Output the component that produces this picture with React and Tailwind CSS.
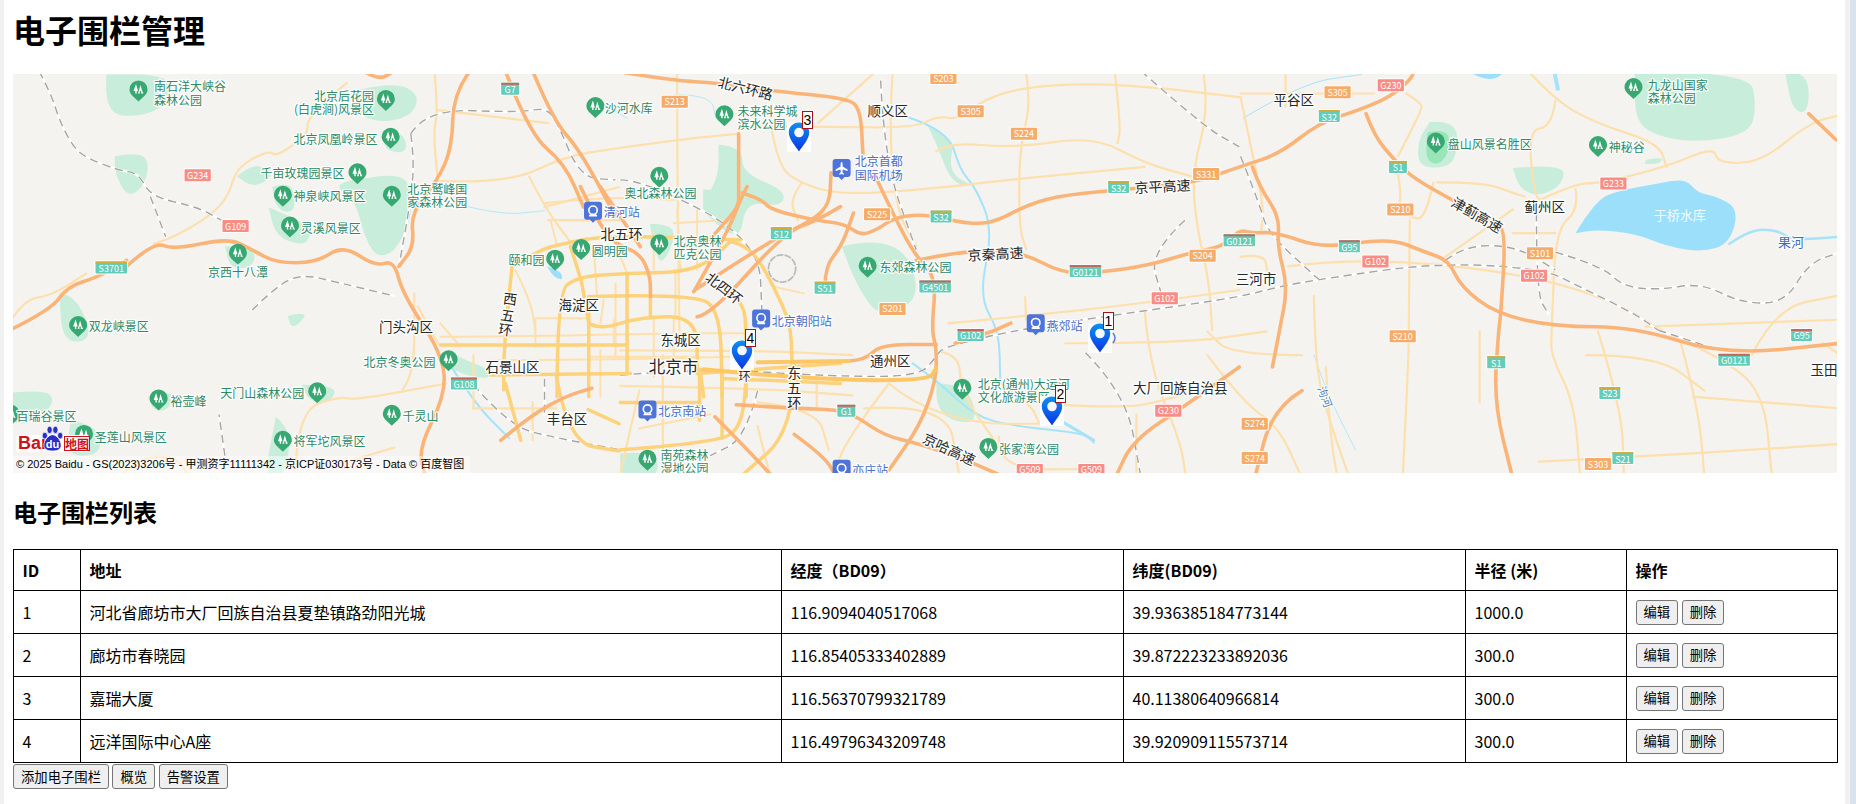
import React from "react";

const S = 1.1837;
const smooth = (s) => {
  const p = s.trim().split(/\s+/).map((q) => q.split(",").map(Number));
  if (p.length < 3) return "M" + p.map((a) => a.join(" ")).join("L");
  let d = `M${p[0][0]} ${p[0][1]}`;
  for (let i = 1; i < p.length - 1; i++) {
    const mx = (p[i][0] + p[i + 1][0]) / 2, my = (p[i][1] + p[i + 1][1]) / 2;
    d += `Q${p[i][0]} ${p[i][1]} ${mx} ${my}`;
  }
  const l = p[p.length - 1];
  return d + `L${l[0]} ${l[1]}`;
};
const poly = (s) => smooth(s + " " + s.trim().split(/\s+/)[0]) + "Z";

const green = [
  "90,63 87,96 120,99 143,87 143,63", "303,76 333,69 355,80 347,99 317,104 300,93", "323,110 340,110 345,129 325,128",
  "320,149 343,146 347,169 347,186 333,214 317,217 307,197 300,169 280,155", "200,149 213,138 230,144 227,152 213,158",
  "230,158 247,152 250,177 240,180 232,172", "227,175 260,189 263,197 257,208 233,200", "97,132 117,128 127,138 120,160 107,166 97,146",
  "50,248 63,248 80,287 53,290", "243,267 263,262 247,279", "8,332 37,329 47,338 33,355 8,360", "233,352 247,363 240,404 223,404",
  "607,122 627,124 627,146 664,161 660,175 630,170 625,205 594,180 594,170 607,150", "711,208 757,197 781,250 744,270 724,242",
  "784,107 807,115 801,146 824,158 804,155 791,121", "1381,60 1478,60 1484,90 1478,113 1431,121 1394,113 1381,99", "1508,60 1528,60 1528,96 1514,93",
  "1208,103 1231,101 1231,132 1221,142 1198,141 1198,118", "1278,142 1321,138 1321,155 1301,166 1284,160", "1391,135 1404,132 1404,138 1388,139",
  "791,324 817,324 827,358 801,355 791,341", "524,383 554,380 557,404 524,404", "377,296 393,304 413,312 413,321 387,315 377,307",
  "549,189 569,189 569,206 558,225 552,206", "594,160 617,160 611,177 594,183", "190,208 215,208 215,225 195,228", "125,335 145,328 145,345 130,348", "255,325 285,325 280,340 262,340",
  "60,355 85,360 85,385 55,385",
];
const light = [
  "524,125 574,118 624,113", "624,107 691,107 774,108 791,98 811,101 831,84 867,73 941,70 1047,82", "791,128 801,120 857,125 924,115 967,138 1007,149",
  "737,163 791,159 824,155 891,148 967,141", "867,63 871,87 861,127 861,192 867,211", "942,63 947,107 944,121", "1017,63 1021,93 1007,146 1011,192 1021,234 1024,279",
  "572,63 572,135 574,279", "754,63 751,107 757,177 774,208", "651,104 657,141 677,155 704,163 737,163", "737,63 691,104", "677,155 667,169 674,186",
  "866,251 867,270", "801,273 867,267 967,256 1047,245", "794,297 811,300 811,330 840,372", "751,324 771,341 824,358 877,358", "897,342 951,345 984,338 1010,330",
  "967,262 971,310 997,372 1002,404", "751,324 714,372 704,404", "1086,63 1086,90", "1048,79 1114,79 1161,79", "1188,79 1201,87 1201,93 1181,132",
  "1291,60 1314,85 1348,104 1401,121 1408,141", "1314,85 1311,107 1291,110 1296,163 1301,169",
  "1301,169 1331,155 1351,155 1408,141 1448,124 1451,138 1488,137 1528,104 1555,97", "1214,154 1254,154 1278,163 1288,166", "1211,154 1204,186 1191,183",
  "1191,186 1190,279 1190,300 1185,404", "1181,146 1184,166 1181,175", "1331,160 1334,177 1314,194 1311,279 1310,300 1330,340 1335,404", "1221,217 1261,189 1278,177",
  "1278,197 1314,197", "1088,225 1148,217 1288,231 1368,256 1401,279 1450,300 1490,330 1497,404", "1048,217 1068,214 1071,231", "1048,82 1058,130 1068,177 1065,197",
  "367,60 370,93 366,113 370,153", "370,93 463,104", "370,153 430,155 477,132 523,125", "293,70 260,97 260,113 250,121 233,132 227,127 200,141 193,166 177,183 147,200 130,206",
  "447,149 460,175 483,206", "460,175 523,158", "463,186 523,186", "8,273 20,253 43,250 73,231", "250,389 253,346 287,335 300,338 377,324", "340,329 350,318 350,248", "370,290 353,259",
  "100,404 117,386 150,386 160,404", "300,388 333,378", "844,369 841,397 932,396", "1350,280 1370,345 1372,404", "1300,390 1420,384 1555,375", "1390,276 1555,270", "1340,300 1400,300 1440,330",
  "1110,250 1111,300 1118,340 1140,404", "1020,300 1050,340 1080,360 1100,404", "1540,290 1555,300", "1430,335 1555,345", "1100,300 1040,300 1020,280", "520,240 520,300", "540,330 524,400", "640,340 690,345 700,380", "730,345 800,340 810,400",
  "840,320 870,340 878,358", "1120,310 1124,370 1130,404", "900,290 1000,290 1070,280", "524,296 640,296 720,300", "524,326 640,328 720,334", "540,362 600,350", "640,360 650,400", "560,300 560,380", "690,318 690,345",
  "400,345 470,345", "400,300 400,345", "450,340 450,372", "1480,300 1500,260 1552,250", "1420,290 1435,345 1440,404", "1250,280 1250,340", "960,350 960,404",
];
const rails = [
  "33,60 43,79 50,101 60,121 70,132 100,144 117,146 127,166 167,175 187,186", "127,166 140,200", "347,113 350,135 347,169 337,225", "347,113 360,92 440,95 460,91 470,101 490,150 520,152",
  "213,262 230,245 253,231 287,239 333,250", "524,317 591,311 704,318 777,318 791,301 797,293 867,277 971,262 1047,251 1081,242 1121,235 1214,222 1304,227 1334,242 1381,265 1401,279",
  "1221,220 1238,207 1281,208 1314,228", "1314,213 1354,225 1371,242 1401,245 1437,239 1471,256 1508,256 1528,222 1555,213", "1048,132 1064,172 1071,197 1114,236",
  "744,68 747,135 774,211", "964,60 1017,107 1047,124", "1001,186 971,214 981,248", "917,298 951,332 964,404", "524,152 544,152 641,203 644,270", "1298,180 1298,248 1308,265",
  "400,325 430,360 470,370 524,380", "640,330 630,370 600,385", "1401,279 1450,295", "460,320 460,350", "190,385 185,350",
];
const orange = [
  "804,186 824,190 844,186 864,175 891,166 937,161 1007,155 1047,141 1081,130 1114,104 1148,93 1174,82 1191,68 1195,60",
  "804,186 784,181 757,183 741,194 727,199 714,189 687,186 651,177 644,169 627,163", "520,60 567,68 607,70 654,77 717,83 727,93 729,130",
  "624,113 624,163 624,175 607,194 600,202", "587,245 651,203 687,186 701,172 702,146", "697,242 697,225 711,208 721,180",
  "741,152 757,186 774,217 791,234 787,279 791,293 791,321 777,360 751,397", "774,220 817,211 864,213 897,231 931,230 971,224 1004,214 1034,208 1047,194 1058,197 1078,196 1117,210 1174,201 1204,213 1224,220 1234,242 1264,265 1314,276 1380,276 1458,300 1555,290",
  "1058,141 1064,158 1081,183 1079,208 1088,242 1081,279 1075,310", "1047,310 1004,341 957,372 942,404", "1154,96 1161,115 1178,135 1191,148 1214,162 1264,189 1272,197 1268,265 1266,279 1262,340 1278,404",
  "1528,96 1551,118", "107,225 130,204 147,211 193,201 213,211 233,222 267,222 290,207 317,225 333,220 340,248 373,298 377,332 353,380 360,404",
  "8,279 43,262 57,242 83,234 107,220", "307,60 320,68 333,60", "397,60 383,79 382,124 370,152 347,180 350,208 337,225",
  "427,60 447,113 477,138 493,175", "450,60 467,101 490,127 520,183", "423,372 447,352 477,335 500,328", "622,342 671,345 707,346 724,352 747,368 777,375 817,389 851,404",
  "604,352 624,372 654,404", "671,367 697,386 707,404", "807,290 834,282 854,273", "717,305 731,304 744,291 791,291", "1100,330 1075,345 1060,404",
];
const yellowZ = [
  "215,230 190,470 190,600", "0,465 350,465 560,465", "150,555 570,550", "350,620 350,310 410,260 560,250 770,245 870,155", "870,155 900,160 950,200 1000,290 1050,400 1055,510 1055,620",
  "215,230 300,180 350,165 500,135 900,150", "390,170 420,260 430,310 445,400", "445,320 770,310 840,370 845,620", "445,320 445,620", "445,400 480,420 600,380 770,380 770,550", "560,250 560,550", "630,320 630,380",
  "770,550 1200,520", "870,310 910,340 917,420 917,620", "780,550 790,620", "845,565 1200,580",
];
const lightZ = [
  "710,60 720,245", "460,170 470,320", "520,150 560,250", "640,130 640,240", "770,150 770,240", "290,385 440,385", "225,240 270,330 285,420", "285,385 285,470", "0,440 190,440 700,430 920,430", "0,400 60,470", "140,510 340,510 700,505 870,500", "640,380 640,560", "705,240 705,380",
  "490,330 480,400", "350,165 330,90", "480,480 480,620", "1000,290 1090,310", "310,40 500,20 700,30", "700,100 860,90", "520,390 520,465", "700,380 700,540", "350,90 470,90", "770,60 770,150", "445,500 770,500",
];
const orangeZ = [
  "420,-10 470,90 520,160 600,190 630,260 630,320", "480,-10 560,110 600,170", "760,305 860,130 900,30 920,-10", "770,380 810,375 1030,130 1130,90 1200,50",
];
const yellowB = [
  "524,380 607,374 627,360 631,312", "671,307 671,363 624,404", "591,312 591,355", "470,318 480,374 523,381", "497,346 523,358", "610,370 610,312", "427,324 440,372", "524,340 591,340",
];
const water = ["1240,60 1256,70 1275,60", "462,225 473,228 476,237 468,234"];
const thinWater = [
  ["767,99 801,110 811,144 824,158 839,194 827,251 844,279 845,320", 2], ["771,307 791,321 824,352 857,360 917,366 924,374", 2], ["897,356 924,372", 3], ["1461,206 1478,194 1501,194 1514,203 1554,200", 2.5],
  ["1313,60 1316,75", 4], ["373,169 420,182 460,178", .8], ["570,80 600,80 605,100", .8], ["505,85 530,100", .8], ["1050,100 1100,70 1150,63", 1], ["1110,300 1120,330 1145,380", .8], ["375,300 400,340 430,370", 2],
];
const gl = [
  [["南石洋大峡谷", "森林公园"], 117, 76, 130, [72.5, 84], "l"], [["北京后花园", "(白虎涧)风景区"], 326, 84, 316, [81, 92], "r"], [["北京凤凰岭景区"], 330, 116, 319, [117], "r"],
  [["千亩玫瑰园景区"], 302, 146, 291, [146], "r"], [["神泉峡风景区"], 239, 165, 248, [165], "l"], [["北京鹫峰国", "家森林公园"], 331, 165, 344, [159, 170], "l"], [["灵溪风景区"], 245, 191, 254, [192], "l"],
  [["京西十八潭"], 201, 214, 201, [229], "c"], [["圆明园"], 491, 210, 500, [212], "l"], [["颐和园"], 469, 219, 460, [219], "r"], [["奥北森林公园"], 557, 149, 558, [163], "c"], [["北京奥林", "匹克公园"], 557, 206, 569, [203, 214], "l"],
  [["东郊森林公园"], 733, 225, 743, [225], "l"], [["未来科学城", "滨水公园"], 612, 97, 623, [93, 104], "l"], [["沙河水库"], 503, 90, 511, [91], "l"], [["双龙峡景区"], 66, 275, 75, [275], "l"], [["北京冬奥公园"], 379, 304, 368, [305], "r"],
  [["天门山森林公园"], 268, 331, 257, [332], "r"], [["裕壶峰"], 134, 337, 144, [338], "l"], [["千灵山"], 331, 350, 340, [351], "l"], [["百瑞谷景区"], 9, 350, 14, [351], "l"], [["圣莲山风景区"], 71, 367, 80, [369], "l"], [["将军坨风景区"], 239, 372, 248, [372], "l"],
  [["九龙山国家", "森林公园"], 1380, 74, 1392, [71, 82], "l"], [["盘山风景名胜区"], 1213, 120, 1223, [121], "l"], [["神秘谷"], 1350, 123, 1359, [124], "l"], [["南苑森林", "湿地公园"], 547, 388, 558, [384, 395], "l"],
  [["北京(通州)大运河", "文化旅游景区"], 813, 328, 826, [324, 335], "l"], [["张家湾公园"], 835, 378, 844, [379], "l"],
];
const bl = [
  [["清河站"], 501, 178, 510, [179], "t"], [["北京首都", "国际机场"], 711, 142, 722, [136, 147], "p"], [["北京朝阳站"], 643, 269, 652, [271], "t"], [["北京南站"], 547, 346, 556, [347], "t"], [["燕郊站"], 875, 273, 884, [275], "t"], [["亦庄站"], 711, 396, 720, [397], "t"],
];
const black = [
  ["顺义区", 750, 93, 13.5], ["平谷区", 1093, 84, 13.5], ["蓟州区", 1305, 174, 13.5], ["三河市", 1061, 235, 13.5], ["通州区", 752, 304, 13.5], ["东城区", 575, 286, 13.5], ["北京市", 569, 309, 16.5], ["海淀区", 489, 257, 13.5],
  ["门头沟区", 343, 275, 13.5], ["石景山区", 433, 309, 13.5], ["丰台区", 479, 353, 13.5], ["大厂回族自治县", 997, 327, 13.5], ["玉田", 1541, 312, 13.5], ["京平高速", 982, 157, 14, -3], ["京秦高速", 841, 214, 14, -3], ["北五环", 525, 197, 14],
  ["北四环", 612, 243, 14, 38], ["北六环路", 630, 74, 14, 14], ["津蓟高速", 1248, 181, 14, 30], ["京哈高速", 802, 379, 14, 25], ["西", 431, 252, 14, 8], ["五", 429, 266, 14, 8], ["环", 427, 278, 14, 8], ["东", 671, 314, 14], ["五", 671, 327, 14], ["环", 671, 340, 14], ["环", 629, 317, 12],
];
const shields = [
  ["G7", 431, 75, "t", "r"], ["S213", 570, 86, "o"], ["S203", 797, 66, "o"], ["S305", 820, 94, "o"], ["S224", 865, 113, "o"], ["S305", 1130, 78, "o"], ["G230", 1175, 72, "f"], ["S32", 1123, 98, "t", "y"], ["S331", 1019, 147, "o"], ["S32", 945, 158, "t", "y"],
  ["S225", 741, 181, "o"], ["S32", 795, 183, "t", "y"], ["S12", 660, 197, "t", "y"], ["S51", 697, 243, "t", "y"], ["G4501", 790, 242, "t", "r"], ["S201", 754, 261, "o"], ["G0121", 917, 229, "t", "r"], ["S204", 1016, 216, "o"], ["G0121", 1047, 203, "t", "r"], ["G102", 984, 252, "f"],
  ["G102", 820, 283, "t", "r"], ["G95", 1140, 208, "t", "r"], ["G102", 1162, 221, "f"], ["S210", 1183, 177, "o"], ["S1", 1181, 141, "t", "y"], ["G233", 1363, 155, "f"], ["S101", 1301, 214, "o"], ["G102", 1296, 233, "f"], ["S210", 1185, 284, "o"], ["S1", 1264, 306, "t", "y"], ["G95", 1522, 283, "t", "r"],
  ["G234", 167, 148, "f"], ["G109", 199, 191, "f"], ["S3701", 94, 226, "t", "y"], ["G108", 392, 324, "t", "r"], ["G1", 715, 347, "t", "r"], ["G230", 987, 347, "f"], ["S274", 1060, 358, "o"], ["S274", 1060, 387, "o"], ["G509", 870, 397, "f"], ["G509", 922, 397, "f"], ["S21", 1371, 387, "t", "y"], ["S303", 1350, 392, "o"], ["G0121", 1465, 304, "t", "r"], ["S23", 1360, 332, "t", "y"],
];

const Lines = ({ list, w, c, dash, op = 1 }) => (
  <g fill="none" stroke={c} strokeWidth={w} strokeOpacity={op} strokeLinejoin="round" strokeLinecap={dash ? "butt" : "round"} strokeDasharray={dash}>
    {list.map((s, i) => <path key={i} d={smooth(s)} vectorEffect="non-scaling-stroke" />)}
  </g>
);

const Pin = ({ x, y, blue, plane }) => {
  const px = x * S, py = y * S;
  if (blue) {
    return (
      <g transform={`translate(${px - 9} ${py - 9})`}>
        <path d="M3 0h12a3 3 0 0 1 3 3v12a3 3 0 0 1-3 3h-3l-3 3-3-3H3a3 3 0 0 1-3-3V3a3 3 0 0 1 3-3z" fill="#4f74d9" />
        {plane ? (
          <path d="M9 3c.8 0 1 1 1 2v2.5l5 3v1.3l-5-1.4v3.2l1.4 1v1L9 14.9 6.600 15.600v-1l1.400-1v-3.200l-5 1.400v-1.300l5-3V5c0-1 .2-2 1-2z" fill="#fff" />
        ) : (
          <g fill="none" stroke="#fff" strokeWidth="1.600"><circle cx="9" cy="8.500" r="4.200" /><path d="M5 14h8M7 12.500l-1 1.500M11 12.500l1 1.500" /></g>
        )}
      </g>
    );
  }
  return (
    <g transform={`translate(${px} ${py})`}>
      <path d="M0 11.500 C-3 8 -9 5 -9 -.5 A9 9 0 0 1 9 -.5 C9 5 3 8 0 11.500Z" fill="#38a873" />
      <path d="M-2.500 -6 L-5 1 H-3.200 V3.500 H-1.800 V1 H-.5 Z M2 -5 L-.500 3.500 H1.300 V1 H2.700 V3.500 H5 L3.500 .5 Z" fill="#fff" />
    </g>
  );
};

const Txt = ({ x, y, size = 12, fill = "#2b8a68", anchor = "start", rot, children, halo = 2.500 }) => (
  <text
    x={x * S} y={y * S} fontSize={size} fill={fill} textAnchor={anchor} dominantBaseline="central"
    stroke="#fff" strokeWidth={halo} strokeOpacity=".85" strokeLinejoin="round"
    transform={rot ? `rotate(${rot} ${x * S} ${y * S})` : undefined}
    className="[paint-order:stroke]"
  >{children}</text>
);

const Poi = ({ item, blue }) => {
  const [lines, px, py, tx, ys, align] = item;
  const a = align === "r" ? "end" : align === "c" ? "middle" : "start";
  return (
    <g>
      <Pin x={px} y={py} blue={blue} plane={align === "p"} />
      {lines.map((t, i) => <Txt key={i} x={tx} y={ys[i]} anchor={blue ? "start" : a} fill={blue ? "#4a6fc9" : "#2b8a68"}>{t}</Txt>)}
    </g>
  );
};

const Shield = ({ s }) => {
  const [t, x, y, k, top] = s;
  const w = Math.max(18, t.length * 5.300 + 5);
  const fill = k === "o" ? "#f7ab68" : k === "f" ? "#f98c84" : "#62cdb9";
  const cx = x * S, cy = y * S;
  return (
    <g>
      <rect x={cx - w / 2 - 1} y={cy - 7} width={w + 2} height={14} rx="2" fill="#fff" opacity=".9" />
      <rect x={cx - w / 2} y={cy - 6} width={w} height={12} rx="1" fill={fill} />
      {top && <rect x={cx - w / 2} y={cy - 6} width={w} height={2} fill={top === "r" ? "#c2685c" : "#d1ab3c"} />}
      <text x={cx} y={cy + (top ? 1 : 0)} fontSize="9" fill="#fff" textAnchor="middle" dominantBaseline="central">{t}</text>
    </g>
  );
};

const Marker = ({ pos, n }) => (
  <div className={`absolute w-6 h-[30px] bg-white/90 ${pos}`}>
    <svg viewBox="0 0 24 30" className="absolute left-0 top-0 h-[30px] w-6">
      <defs>
        <linearGradient id={`mg${n}`} x1="0" y1="0" x2="0" y2="1">
          <stop offset="0" stopColor="#0f90f0" />
          <stop offset="1" stopColor="#0a35e6" />
        </linearGradient>
      </defs>
      <path d="M12 .5C6 .5 1.800 5 1.800 10.500 1.800 17 8.500 24 12 29.500 15.500 24 22.200 17 22.200 10.500 22.200 5 18 .5 12 .5Z" fill={`url(#mg${n})`} />
      <circle cx="12" cy="10.500" r="4.800" fill="#f4f8fb" />
    </svg>
    <div className="absolute left-[15px] top-[-11px] flex h-[18px] w-[11px] items-center justify-center border border-[#a5121c] bg-white font-['Liberation_Sans',sans-serif] text-[14px] leading-none text-black">{n}</div>
  </div>
);

const BaiduLogo = () => (
  <div className="absolute left-[3px] top-[351px] h-[27px] w-[73px]">
    <div className="absolute bottom-0 left-0 h-[17px] w-[73px] rounded-[2px] bg-white/90" />
    <span className="absolute bottom-[1px] left-[2px] font-['Liberation_Sans',sans-serif] text-[18px] font-bold leading-[16px] text-[#d0101c]">Bai</span>
    <svg viewBox="0 0 24 28" className="absolute left-[25px] top-0 h-[27px] w-[23px]">
      <g fill="#2a2fc8" stroke="#fff" strokeWidth=".8">
        <ellipse cx="4" cy="11" rx="2.800" ry="3.500" /><ellipse cx="9" cy="5" rx="2.800" ry="3.800" /><ellipse cx="15" cy="5" rx="2.800" ry="3.800" /><ellipse cx="20" cy="11" rx="2.800" ry="3.500" />
        <path d="M12 10c4 0 9 6 9 11 0 4-3 6-9 6s-9-2-9-6c0-5 5-11 9-11z" />
      </g>
    </svg>
    <span className="absolute bottom-[2px] left-[28px] w-[17px] text-center font-['Liberation_Sans',sans-serif] text-[11px] font-bold leading-[11px] text-white">du</span>
    <span className="absolute bottom-[1px] left-[48px] whitespace-nowrap border border-[#d0101c] text-[12px] font-bold leading-[13px] text-[#d0101c]">地图</span>
  </div>
);

const MapView = () => (
  <div className="relative h-[399px] w-[1824px] overflow-hidden bg-[#f4f3f0]">
    <svg viewBox="13 74 1824 399" className="absolute left-0 top-0 h-[399px] w-[1824px]">
      <g transform={`scale(${S})`}>
        {green.map((s, i) => <path key={i} d={poly(s)} fill="#c8eedb" />)}
        <path d={poly("1206,112 1222,108 1226,125 1216,140 1204,135")} fill="#99e5b8" />
        <path d={poly("1331,197 1348,169 1368,161 1401,155 1424,151 1434,163 1451,166 1469,177 1461,206 1438,213 1408,208 1381,197 1348,194")} fill="#9cdffa" />
        {water.map((s, i) => <path key={i} d={poly(s)} fill="#9cdffa" />)}
        <g fill="none" stroke="#a6e3fa" strokeLinecap="round">
          {thinWater.map(([s, w], i) => <path key={i} d={smooth(s)} strokeWidth={w} vectorEffect="non-scaling-stroke" />)}
        </g>
        <Lines list={light} w={2.200} c="#fde0ad" />
        <g transform="translate(372 160.500) scale(.2817)"><Lines list={lightZ} w={2} c="#fde0ad" /></g>
        <circle cx="660.700" cy="226.800" r="11.500" fill="none" stroke="#bbb" strokeWidth="1.500" strokeDasharray="6 1" />
        <Lines list={rails} w={2.400} c="#fff" />
        <Lines list={rails} w={1.400} c="#a5a5a5" dash="8 5" />
        <g transform="translate(372 160.500) scale(.2817)"><Lines list={yellowZ} w={3.500} c="#fdd27a" /></g>
        <Lines list={yellowB} w={3.500} c="#fdd27a" />
        <Lines list={orange} w={3.600} c="#fbb478" />
        <g transform="translate(372 160.500) scale(.2817)"><Lines list={orangeZ} w={3.600} c="#fbb478" /></g>
        <Lines list={["594,312 677,320 784,322 791,311", "640,306 717,305"]} w={4} c="#fdc766" />
      </g>
      <path d="M1113 333 Q1117 338 1113 343" fill="none" stroke="#5a7bd0" strokeWidth="1.500" />
      {shields.map((s, i) => <Shield key={i} s={s} />)}
      {gl.map((g, i) => <Poi key={i} item={g} />)}
      {bl.map((g, i) => <Poi key={i} item={g} blue />)}
      {black.map(([t, x, y, sz, rot], i) => <Txt key={i} x={x} y={y} size={sz} fill="#26282b" anchor="middle" rot={rot} halo={3}>{t}</Txt>)}
      <Txt x={1419} y={181} size={13} fill="#f2fbff" anchor="middle" halo={0}>于桥水库</Txt>
      <Txt x={1513} y={204} size={13} fill="#3f6fb8" anchor="middle">果河</Txt>
      <Txt x={1120} y={335} size={11} fill="#4f7fc0" anchor="middle" rot={70}>泃河</Txt>
    </svg>
    <Marker pos="left-[1075px] top-[249px]" n={1} />
    <Marker pos="left-[1027px] top-[322px]" n={2} />
    <Marker pos="left-[774px] top-[48px]" n={3} />
    <Marker pos="left-[717px] top-[266px]" n={4} />
    <BaiduLogo />
    <div className="absolute bottom-0 left-0 h-[17px] w-[457px] whitespace-nowrap bg-white/45 pl-[3px] font-['Liberation_Sans','Noto_Sans_CJK_SC',sans-serif] text-[11px] leading-[17px] text-black">
      © 2025 Baidu - GS(2023)3206号 - 甲测资字11111342 - 京ICP证030173号 - Data © 百度智图
    </div>
  </div>
);

const Btn = ({ children }) => (
  <button className="h-[25px] rounded-[3px] border border-[#767676] bg-[#efefef] px-[7px] text-[13.333px] leading-none text-black">{children}</button>
);

const rows = [
  ["1", "河北省廊坊市大厂回族自治县夏垫镇路劲阳光城", "116.9094040517068", "39.936385184773144", "1000.0"],
  ["2", "廊坊市春晓园", "116.85405333402889", "39.872223233892036", "300.0"],
  ["3", "嘉瑞大厦", "116.56370799321789", "40.11380640966814", "300.0"],
  ["4", "远洋国际中心A座", "116.49796343209748", "39.920909115573714", "300.0"],
];
const heads = ["ID", "地址", "经度（BD09）", "纬度(BD09)", "半径 (米)", "操作"];
const cell = "border border-black pl-[8.5px] pr-2 text-left align-middle";

export default function App() {
  return (
    <div className="flex h-[804px] w-[1856px] overflow-hidden bg-white font-['Noto_Sans_CJK_SC',sans-serif] text-black">
      <div className="w-[4px] shrink-0 bg-[#f1f1f1]" />
      <main className="w-[1841px] shrink-0 pl-[9px]">
        <h1 className="mb-[22px] mt-[6px] h-[46px] text-[32px] font-bold leading-[46px]">电子围栏管理</h1>
        <MapView />
        <h2 className="mb-[20px] mt-[21px] h-[35px] text-[24px] font-bold leading-[35px]">电子围栏列表</h2>
        <table className="w-[1824px] table-fixed border-collapse text-[16px]">
          <colgroup>
            <col className="w-[67px]" /><col className="w-[701px]" /><col className="w-[342px]" /><col className="w-[342px]" /><col className="w-[161px]" /><col className="w-[211px]" />
          </colgroup>
          <thead>
            <tr className="h-[41px]">{heads.map((h) => <th key={h} className={`${cell} font-bold`}>{h}</th>)}</tr>
          </thead>
          <tbody>
            {rows.map((r) => (
              <tr key={r[0]} className="h-[43px]">
                {r.map((c, i) => <td key={i} className={cell}>{c}</td>)}
                <td className={cell}>
                  <div className="flex gap-[3.5px]"><Btn>编辑</Btn><Btn>删除</Btn></div>
                </td>
              </tr>
            ))}
          </tbody>
        </table>
        <div className="mt-[1px] flex gap-[3.5px]"><Btn>添加电子围栏</Btn><Btn>概览</Btn><Btn>告警设置</Btn></div>
      </main>
      <div className="w-[5px] shrink-0 bg-[#f1f1f1]" />
      <div className="flex-1 bg-[#d6e4ef]" />
    </div>
  );
}
